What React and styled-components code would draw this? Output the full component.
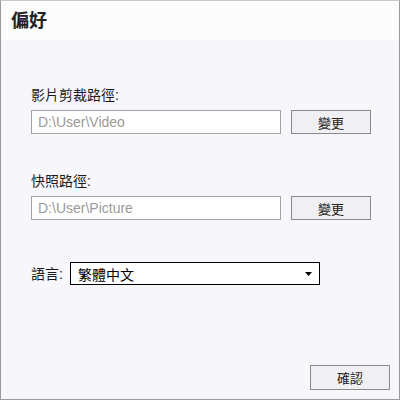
import React from "react";
import styled, { createGlobalStyle } from "styled-components";

const Global = createGlobalStyle`
  html, body { margin: 0; padding: 0; background: #fff; }
  * { box-sizing: border-box; }
`;

const FONT = `"Liberation Sans", Arial, "Noto Sans CJK TC", sans-serif`;

const Window = styled.div`
  width: 400px;
  height: 400px;
  border: 1px solid #9a9a9a;
  border-top-color: #c8c8c8;
  background: #f7f7fb;
  display: flex;
  flex-direction: column;
  font-family: ${FONT};
  color: #1a1a1a;
`;

const Header = styled.div`
  height: 39px;
  background: #fcfcfd;
  padding: 9px 0 0 10px;
  font-size: 18px;
  font-weight: bold;
  line-height: 22px;
  color: #222;
`;

const Body = styled.div`
  flex: 1;
  display: flex;
  flex-direction: column;
  padding: 47px 9px 9px 30px;
`;

const Group = styled.div`
  display: flex;
  flex-direction: column;
  margin-bottom: ${(p) => p.$mb || 0}px;
`;

const Label = styled.div`
  font-size: 14px;
  line-height: 16px;
  height: 16px;
  margin-bottom: 7px;
  color: #1a1a1a;
`;

const Row = styled.div`
  display: flex;
  align-items: center;
  gap: 10px;
`;

const PathInput = styled.div`
  width: 250px;
  height: 24px;
  border: 1px solid #a3a3a3;
  background: #fff;
  color: #9a9a9a;
  font-size: 14px;
  line-height: 22px;
  padding-left: 6px;
`;

const Button = styled.button`
  width: 80px;
  height: ${(p) => p.$h || 24}px;
  border: 1px solid #8a8a8a;
  background: #f0f0f3;
  font-family: ${FONT};
  font-size: 13px;
  color: #222;
  padding: 0;
  margin: 0;
  cursor: pointer;
`;

const LangRow = styled.div`
  display: flex;
  align-items: center;
  gap: 7px;
`;

const LangLabel = styled.span`
  font-size: 14px;
  line-height: 16px;
  color: #1a1a1a;
`;

const Select = styled.div`
  width: 250px;
  height: 23px;
  border: 1px solid #000;
  background: #fff;
  display: flex;
  align-items: center;
  justify-content: space-between;
  padding: 0 7px 0 7px;
  font-size: 14px;
  color: #000;
`;

const Arrow = styled.svg`
  width: 7px;
  height: 4px;
  display: block;
`;

const Footer = styled.div`
  margin-top: auto;
  display: flex;
  justify-content: flex-end;
`;

export default function App() {
  return (
    <>
      <Global />
      <Window>
        <Header>偏好</Header>
        <Body>
          <Group $mb={39}>
            <Label>影片剪裁路徑:</Label>
            <Row>
              <PathInput>D:\User\Video</PathInput>
              <Button>變更</Button>
            </Row>
          </Group>
          <Group $mb={42}>
            <Label>快照路徑:</Label>
            <Row>
              <PathInput>D:\User\Picture</PathInput>
              <Button>變更</Button>
            </Row>
          </Group>
          <LangRow>
            <LangLabel>語言:</LangLabel>
            <Select>
              <span>繁體中文</span>
              <Arrow viewBox="0 0 7 4">
                <path d="M0 0 H7 L3.5 4 Z" fill="#000" />
              </Arrow>
            </Select>
          </LangRow>
          <Footer>
            <Button $h={25}>確認</Button>
          </Footer>
        </Body>
      </Window>
    </>
  );
}
